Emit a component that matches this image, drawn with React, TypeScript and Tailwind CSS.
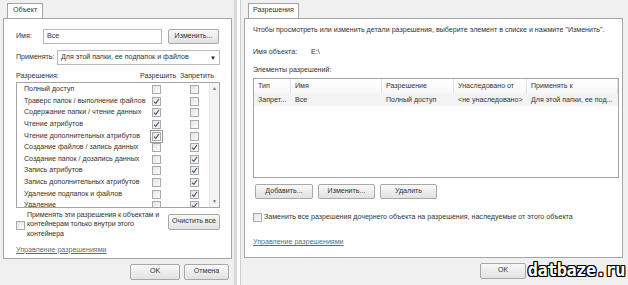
import React from "react";

const font = "font-['Liberation_Sans','DejaVu_Sans',sans-serif]";

function Check({ on, focus }: { on?: boolean; focus?: boolean }) {
  return (
    <div
      className={`w-[9px] h-[9px] border border-[#a9a9a9] bg-gradient-to-br from-[#e4e4e4] to-[#fbfbfb] flex items-center justify-center ${
        focus ? "outline outline-1 outline-[#999] outline-offset-1" : ""
      }`}
    >
      {on && (
        <svg width="7" height="7" viewBox="0 0 7 7">
          <path d="M1 3.6 L2.8 5.4 L6 1" fill="none" stroke="#4a5a6a" strokeWidth="1.2" />
        </svg>
      )}
    </div>
  );
}

function Btn({ children, className = "" }: { children: React.ReactNode; className?: string }) {
  return (
    <div
      className={`flex items-center justify-center rounded-[2px] border border-[#a8a8a8] bg-gradient-to-b from-[#f8f8f8] to-[#e2e2e2] text-[#333] ${className}`}
    >
      {children}
    </div>
  );
}

const perms: [string, boolean, boolean, boolean?][] = [
  ["Полный доступ", false, false],
  ["Траверс папок / выполнение файлов", true, false],
  ["Содержание папки / чтение данных", true, false],
  ["Чтение атрибутов", true, false],
  ["Чтение дополнительных атрибутов", true, false, true],
  ["Создание файлов / запись данных", false, true],
  ["Создание папок / дозапись данных", false, true],
  ["Запись атрибутов", false, true],
  ["Запись дополнительных атрибутов", false, true],
  ["Удаление подпапок и файлов", false, true],
  ["Удаление", false, true],
];

function LeftWindow() {
  return (
    <div className="w-[237px] h-[285px] shrink-0 bg-[#f0f0f0] border-r-[3px] border-[#d9d9d9] flex flex-col">
      <div className="pl-[7px] pt-[3px] flex">
        <div className="h-[15px] px-[5px] border border-b-0 border-[#a5a5a5] bg-white flex items-center text-[#333]">
          Объект
        </div>
      </div>
      <div className="ml-[3px] w-[229px] h-[241px] border border-[#a5a5a5] bg-white pl-[12px] pr-[11px] flex flex-col">
        <div className="mt-[10px] flex items-center h-[15px]">
          <span className="w-[27px]">Имя:</span>
          <div className="w-[119px] h-[15px] border border-[#b9b9b9] px-[3px] flex items-center">Все</div>
          <Btn className="ml-[6px] w-[51px] h-[15px]">Изменить...</Btn>
        </div>
        <div className="mt-[6px] flex items-center h-[15px]">
          <span className="w-[41px]">Применять:</span>
          <div className="flex-1 h-[15px] border border-[#b9b9b9] px-[3px] flex items-center justify-between">
            <span>Для этой папки, ее подпапок и файлов</span>
            <span className="text-[6px] text-[#222]">▼</span>
          </div>
        </div>
        <div className="mt-[7px] flex items-center h-[9px]">
          <span className="flex-1">Разрешения:</span>
          <span className="w-[40px]">Разрешить</span>
          <span className="w-[40px]">Запретить</span>
        </div>
        <div className="mt-[1px] h-[126px] shrink-0 border border-[#a5a5a5] flex overflow-hidden">
          <div className="flex-1 pt-[1px]">
            {perms.map(([name, a, d, f]) => (
              <div key={name} className="h-[11.6px] flex items-center">
                <span className="w-[129px] pl-[7px] whitespace-nowrap">{name}</span>
                <div className="ml-[6px] w-[38px]">
                  <Check on={a} focus={f} />
                </div>
                <Check on={d} />
              </div>
            ))}
          </div>
          <div className="w-[10px] bg-[#f4f4f4] border-l border-[#e6e6e6] flex flex-col justify-between items-center py-[3px] text-[5px] text-[#777]">
            <span>▲</span>
            <span>▼</span>
          </div>
        </div>
        <div className="mt-[3px] flex">
          <div className="flex-1 flex">
            <div className="pt-[10px]">
              <Check />
            </div>
            <div className="ml-[1px] pl-[1px] leading-[9.3px] w-[141px] tracking-[-0.1px]">
              Применять эти разрешения к объектам и контейнерам только внутри этого контейнера
            </div>
          </div>
          <Btn className="mt-[3px] w-[52px] h-[16px] shrink-0">Очистить все</Btn>
        </div>
        <div className="mt-[8px] text-[#5a6b86] underline">Управление разрешениями</div>
      </div>
      <div className="mt-[5px] flex pl-[130px] gap-[4px]">
        <Btn className="w-[50px] h-[16px]">OK</Btn>
        <Btn className="w-[45px] h-[16px]">Отмена</Btn>
      </div>
    </div>
  );
}

const cols = [
  { t: "Тип", w: "w-[37px]" },
  { t: "Имя", w: "w-[91px]" },
  { t: "Разрешение", w: "w-[72px]" },
  { t: "Унаследовано от", w: "w-[73px]" },
  { t: "Применять к", w: "flex-1" },
];
const row = ["Запрет...", "Все", "Полный доступ", "<не унаследовано>", "Для этой папки, ее под..."];

function RightWindow() {
  return (
    <div className="ml-[3px] flex-1 h-[285px] bg-[#f0f0f0] border-l border-[#cfcfcf] flex flex-col">
      <div className="pl-[7px] pt-[3px] flex">
        <div className="h-[15px] px-[4px] border border-b-0 border-[#a5a5a5] bg-white flex items-center text-[#333]">
          Разрешения
        </div>
      </div>
      <div className="ml-[3px] w-[379px] h-[240px] border border-[#a5a5a5] bg-white pl-[8px] pr-[3px] flex flex-col">
        <div className="mt-[8px] whitespace-nowrap">
          Чтобы просмотреть или изменить детали разрешения, выберите элемент в списке и нажмите "Изменить".
        </div>
        <div className="mt-[15px] flex">
          <span className="w-[58px]">Имя объекта:</span>
          <span>E:\</span>
        </div>
        <div className="mt-[11px]">Элементы разрешений:</div>
        <div className="mt-[4px] h-[100px] border border-[#a5a5a5] flex flex-col">
          <div className="h-[15px] flex bg-gradient-to-b from-white to-[#f6f6f6]">
            {cols.map((c) => (
              <div key={c.t} className={`${c.w} pl-[4px] flex items-center border-r border-[#e2e2e2]`}>
                {c.t}
              </div>
            ))}
          </div>
          <div className="h-[12px] flex bg-[#f3f3f3]">
            {cols.map((c, i) => (
              <div key={c.t} className={`${c.w} pl-[4px] flex items-center whitespace-nowrap overflow-hidden`}>
                {row[i]}
              </div>
            ))}
          </div>
        </div>
        <div className="mt-[6px] flex gap-[5px] ml-[2px]">
          <Btn className="w-[58px] h-[15px]">Добавить...</Btn>
          <Btn className="w-[57px] h-[15px]">Изменить...</Btn>
          <Btn className="w-[57px] h-[15px]">Удалить</Btn>
        </div>
        <div className="mt-[14px] flex items-center gap-[2px]">
          <Check />
          <span>Заменить все разрешения дочернего объекта на разрешения, наследуемые от этого объекта</span>
        </div>
        <div className="mt-[17px] text-[#5a6b86] underline">Управление разрешениями</div>
      </div>
      <div className="mt-[5px] flex pl-[239px]">
        <Btn className="w-[46px] h-[16px]">OK</Btn>
      </div>
    </div>
  );
}

export default function App() {
  return (
    <div className={`relative w-[628px] h-[285px] overflow-hidden bg-white flex text-[7.1px] leading-none text-[#333] ${font}`}>
      <LeftWindow />
      <RightWindow />
      <div className="absolute right-[3px] bottom-[6px] font-['DejaVu_Sans_Mono',monospace] font-bold text-[17px] tracking-[-0.5px] leading-none text-white [text-shadow:1px_1px_0_#000,-1px_-1px_0_#000,1px_-1px_0_#000,-1px_1px_0_#000,0_1px_0_#000,0_-1px_0_#000,1px_0_0_#000,-1px_0_0_#000]">
        datbaze.ru
      </div>
    </div>
  );
}
